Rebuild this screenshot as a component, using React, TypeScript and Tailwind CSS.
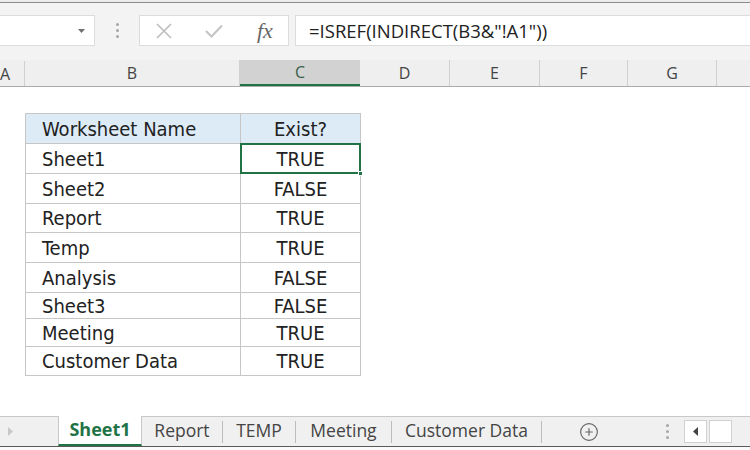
import { CirclePlus } from 'lucide-react';

const columns = [
  { label: 'B', width: 'w-[215px]' },
  { label: 'C', width: 'w-[120px]', active: true },
  { label: 'D', width: 'w-[90px]' },
  { label: 'E', width: 'w-[90px]' },
  { label: 'F', width: 'w-[88px]' },
  { label: 'G', width: 'w-[89px]' },
];

const rows = [
  { name: 'Sheet1', exists: 'TRUE', h: 'h-[30px]' },
  { name: 'Sheet2', exists: 'FALSE', h: 'h-[30px]' },
  { name: 'Report', exists: 'TRUE', h: 'h-[29px]' },
  { name: 'Temp', exists: 'TRUE', h: 'h-[30px]' },
  { name: 'Analysis', exists: 'FALSE', h: 'h-[30px]' },
  { name: 'Sheet3', exists: 'FALSE', h: 'h-[26px]' },
  { name: 'Meeting', exists: 'TRUE', h: 'h-[28px]' },
  { name: 'Customer Data', exists: 'TRUE', h: 'h-[29px]' },
];

// tab label + its width (separator follows each)
const tabs = [
  { label: 'Report', w: 'w-[80px]' },
  { label: 'TEMP', w: 'w-[72px]' },
  { label: 'Meeting', w: 'w-[95px]' },
  { label: 'Customer Data', w: 'w-[149px]' },
];

const ui = "font-['Open_Sans',sans-serif]";
const cell = "font-['DejaVu_Sans_Condensed','DejaVu_Sans',sans-serif] text-[20px] text-[#222]";

function VDots() {
  return (
    <div className="flex flex-col gap-[3px]">
      <span className="w-[3px] h-[3px] rounded-full bg-[#a6a6a6]" />
      <span className="w-[3px] h-[3px] rounded-full bg-[#a6a6a6]" />
      <span className="w-[3px] h-[3px] rounded-full bg-[#a6a6a6]" />
    </div>
  );
}

export default function App() {
  return (
    <div className="w-[750px] h-[450px] flex flex-col bg-white overflow-hidden">
      {/* top edge */}
      <div className="h-[3px] bg-[#ececec] border-b border-[#8c8c8c]" />

      {/* formula bar */}
      <div className="h-[57px] bg-[#f3f3f3] flex items-start pt-[12px]">
        <div className="w-[95px] h-[31px] bg-white border border-l-0 border-[#dcdcdc] flex items-center justify-end pr-[9px]">
          <svg width="7" height="4" viewBox="0 0 7 4">
            <path d="M0 0 L7 0 L3.5 4 Z" fill="#707070" />
          </svg>
        </div>
        <div className="w-[44px] h-[31px] flex items-center justify-center">
          <VDots />
        </div>
        <div className="w-[150px] h-[31px] bg-white border border-[#dcdcdc] flex items-center">
          <svg className="ml-[16px]" width="16" height="16" viewBox="0 0 16 16">
            <path d="M1 1 L15 15 M15 1 L1 15" stroke="#bdbdbd" strokeWidth="1.6" />
          </svg>
          <svg className="ml-[33px]" width="18" height="14" viewBox="0 0 18 14">
            <path d="M1 7 L6.5 12.5 L17 1.5" stroke="#c4c4c4" strokeWidth="2" fill="none" />
          </svg>
          <span className="ml-[34px] font-['Liberation_Serif',serif] italic text-[22px] leading-none text-[#666]">
            fx
          </span>
        </div>
        <div className="flex-1 ml-[6px] h-[31px] bg-white border border-r-0 border-[#dcdcdc] flex items-center pl-[13px]">
          <span className={`${ui} text-[18.5px] text-[#222]`}>=ISREF(INDIRECT(B3&amp;"!A1"))</span>
        </div>
      </div>

      {/* column headers */}
      <div className={`${ui} h-[27px] bg-[#efefef] border-b border-[#ababab] flex text-[16px] text-[#444]`}>
        <div className="w-[25px] shrink-0 border-r border-[#d0d0d0] flex items-center mt-[1px]">A</div>
        {columns.map((c) => (
          <div
            key={c.label}
            className={`${c.width} shrink-0 flex items-center justify-center ${
              c.active
                ? 'bg-[#d2d2d2] border-b-2 border-[#217346] text-[#3b5e4a]'
                : 'border-r border-[#d0d0d0]'
            }`}
          >
            {c.label}
          </div>
        ))}
        <div className="flex-1" />
      </div>

      {/* sheet */}
      <div className="flex-1 pt-[26px] pl-[25px]">
        <div className="w-[336px] border border-[#c6c6c6] flex flex-col">
          <div className={`${cell} h-[29px] flex bg-[#ddebf7]`}>
            <div className="w-[215px] border-r border-[#c6c6c6] flex items-center pl-[16px]">Worksheet Name</div>
            <div className="flex-1 flex items-center justify-center">Exist?</div>
          </div>
          {rows.map((r, i) => (
            <div key={r.name} className={`${cell} ${r.h} flex border-t border-[#c6c6c6]`}>
              <div className="w-[215px] border-r border-[#c6c6c6] flex items-center pl-[16px]">{r.name}</div>
              <div
                className={`flex-1 flex items-center justify-center relative ${
                  i === 0 ? 'outline-2 outline-[#217346] -outline-offset-1' : ''
                }`}
              >
                {r.exists}
                {i === 0 && (
                  <span className="absolute -right-[3px] -bottom-[3px] w-[5px] h-[5px] bg-[#217346] border border-white" />
                )}
              </div>
            </div>
          ))}
        </div>
      </div>

      {/* sheet tabs */}
      <div className={`${ui} h-[30px] bg-[#f0f0f0] border-t border-[#c8c8c8] flex items-stretch text-[17.5px] text-[#444]`}>
        <div className="w-[58px] flex items-center pl-[8px]">
          <svg width="5" height="9" viewBox="0 0 5 9">
            <path d="M0 0 L5 4.5 L0 9 Z" fill="#c8c8c8" />
          </svg>
        </div>
        <div className="w-[84px] -mt-px bg-white border-x border-[#c8c8c8] border-b-2 border-b-[#217346] flex items-center justify-center pb-[1px] font-bold text-[#217346] text-[18px]">
          Sheet1
        </div>
        {tabs.map((t) => (
          <div key={t.label} className="flex items-center">
            <div className={`${t.w} flex items-center justify-center pb-[2px]`}>{t.label}</div>
            <div className="w-px h-[22px] bg-[#bcbcbc]" />
          </div>
        ))}
        <div className="w-[57px] flex items-center justify-end">
          <CirclePlus size={20} strokeWidth={1.4} color="#666" />
        </div>
        <div className="w-[70px] flex items-center justify-end">
          <VDots />
        </div>
        <div className="ml-[15px] flex items-center gap-[2px]">
          <div className="w-[23px] h-[23px] bg-white border border-[#d0d0d0] flex items-center justify-center">
            <svg width="5" height="9" viewBox="0 0 5 9">
              <path d="M5 0 L0 4.5 L5 9 Z" fill="#444" />
            </svg>
          </div>
          <div className="w-[23px] h-[23px] bg-white border border-[#d0d0d0]" />
        </div>
      </div>
      <div className="h-[4px] border-t border-[#5a5a5a] bg-[#fafafa]" />
    </div>
  );
}
